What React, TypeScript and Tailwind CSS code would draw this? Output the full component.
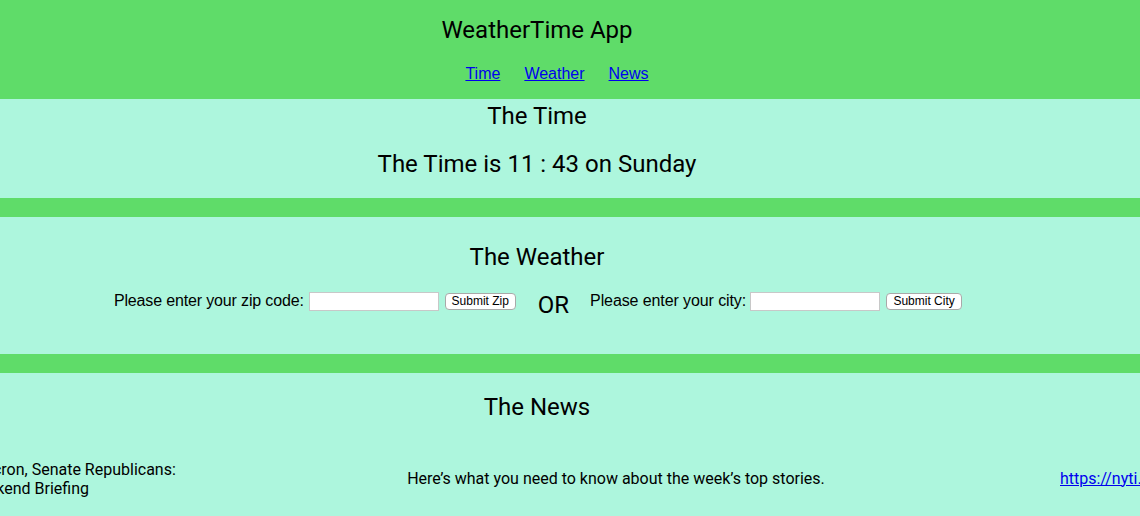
import React from 'react'

const roboto = { fontFamily: 'Roboto, "Liberation Sans", sans-serif' }

function Heading({ children, className = '' }: { children: React.ReactNode; className?: string }) {
  return (
    <h2 className={`w-[1074px] text-center text-[24px] leading-[28px] font-normal text-black ${className}`}>{children}</h2>
  )
}

export default function App() {
  return (
    <div className="w-[1140px] h-[516px] overflow-hidden bg-[#adf6dd] font-['Roboto',sans-serif] text-black">
      {/* Header */}
      <header className="h-[99px] bg-[#5fdc69] pt-[16px]">
        <h1 className="w-[1074px] text-center text-[24px] leading-[28px] font-normal">WeatherTime App</h1>
        <nav className="w-[1114px] mt-[21px] flex justify-center gap-6 text-[16px] leading-[18px] font-['Liberation_Sans',Arial,sans-serif]">
          <a href="#time" className="text-[#0000ee] underline">Time</a>
          <a href="#weather" className="text-[#0000ee] underline">Weather</a>
          <a href="#news" className="text-[#0000ee] underline">News</a>
        </nav>
      </header>

      {/* Time */}
      <section id="time" className="h-[99px] pt-[3px]">
        <Heading>The Time</Heading>
        <Heading className="mt-[20px]">The Time is 11 : 43 on Sunday</Heading>
      </section>

      <div className="h-[19px] bg-[#5fdc69]" />

      {/* Weather */}
      <section id="weather" className="h-[137px] pt-[26px]">
        <Heading>The Weather</Heading>
        <div className="w-[1076px] mt-[18px] flex justify-center items-center h-[24px] text-[16px] font-['Liberation_Sans',Arial,sans-serif]">
          <label className="whitespace-nowrap tracking-[-0.15px]">Please enter your zip code:</label>
          <input className="ml-[5px] w-[130px] h-[19px] bg-white border border-[#c8c8c8] outline-none" />
          <button className="ml-[6px] w-[71px] h-[17px] bg-white border border-[#a9a9a9] rounded-[4px] text-[12px] leading-none">Submit Zip</button>
          <span className="ml-[22px] mt-[8px] text-[24px] leading-[28px]" style={roboto}>OR</span>
          <label className="ml-[21px] whitespace-nowrap tracking-[-0.1px]">Please enter your city:</label>
          <input className="ml-[4px] w-[130px] h-[19px] bg-white border border-[#c8c8c8] outline-none" />
          <button className="ml-[6px] w-[76px] h-[17px] bg-white border border-[#a9a9a9] rounded-[4px] text-[12px] leading-none">Submit City</button>
        </div>
      </section>

      <div className="h-[19px] bg-[#5fdc69]" />

      {/* News */}
      <section id="news" className="pt-[20px]">
        <Heading>The News</Heading>
        <div className="mt-[38px] flex items-center text-[16px] leading-[19px]">
          <div className="w-[360px] -ml-[171px] shrink-0 text-center whitespace-nowrap">
            <span className="block pl-[20px] translate-y-[1px]">James Comey, Macron, Senate Republicans:</span>
            <span className="block translate-y-[1px]">Your Weekend Briefing</span>
          </div>
          <div className="w-[854px] shrink-0 text-center">
            Here’s what you need to know about the week’s top stories.
          </div>
          <div className="pl-[17px] shrink-0 whitespace-nowrap">
            <a href="#news" className="text-[#0000ee] underline">https://nyti.ms/2rR6ZmV</a>
          </div>
        </div>
      </section>
    </div>
  )
}
